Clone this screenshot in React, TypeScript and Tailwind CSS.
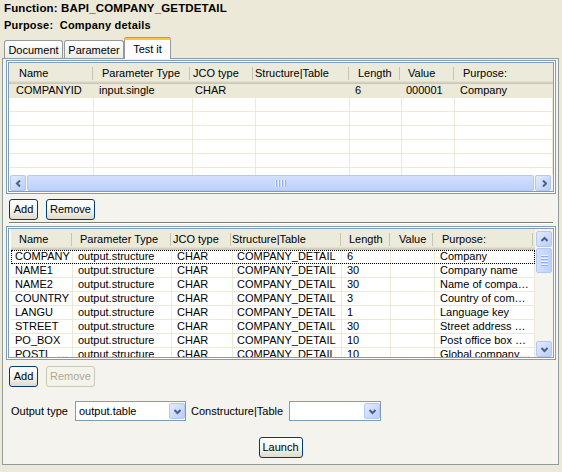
type Head = { label: string; w: string; p: string; sep?: boolean };
type Cell = { w: string; p: string };

const upperHead: Head[] = [
  { label: 'Name', w: 'w-[84px]', p: 'pl-[10px]', sep: true },
  { label: 'Parameter Type', w: 'w-[97px]', p: 'pl-[9px]', sep: true },
  { label: 'JCO type', w: 'w-[63px]', p: 'pl-[3px]', sep: true },
  { label: 'Structure|Table', w: 'w-[96px]', p: 'pl-[2px]', sep: true },
  { label: 'Length', w: 'w-[51px]', p: 'pl-[9px]', sep: true },
  { label: 'Value', w: 'w-[54px]', p: 'pl-[8px]', sep: true },
  { label: 'Purpose:', w: 'w-[99px]', p: 'pl-[9px]' },
];

const upperCells: Cell[] = [
  { w: 'w-[85px]', p: 'pl-[7px]' },
  { w: 'w-[99px]', p: 'pl-[5px]' },
  { w: 'w-[63px]', p: 'pl-[2px]' },
  { w: 'w-[94px]', p: 'pl-[5px]' },
  { w: 'w-[52px]', p: 'pl-[5px]' },
  { w: 'w-[53px]', p: 'pl-[4px]' },
  { w: 'w-[98px]', p: 'pl-[5px]' },
];

const lowerHead: Head[] = [
  { label: 'Name', w: 'w-[61px]', p: 'pl-[8px]', sep: true },
  { label: 'Parameter Type', w: 'w-[99px]', p: 'pl-[8px]', sep: true },
  { label: 'JCO type', w: 'w-[60px]', p: 'pl-[2px]', sep: true },
  { label: 'Structure|Table', w: 'w-[110px]', p: 'pl-[1px]', sep: true },
  { label: 'Length', w: 'w-[49px]', p: 'pl-[8px]', sep: true },
  { label: 'Value', w: 'w-[43px]', p: 'pl-[9px]', sep: true },
  { label: 'Purpose:', w: 'w-[100px]', p: 'pl-[9px]', sep: true },
];

const lowerCells: Cell[] = [
  { w: 'w-[62px]', p: 'pl-[4px]' },
  { w: 'w-[99px]', p: 'pl-[5px]' },
  { w: 'w-[61px]', p: 'pl-[5px]' },
  { w: 'w-[109px]', p: 'pl-[4px]' },
  { w: 'w-[49px]', p: 'pl-[5px]' },
  { w: 'w-[44px]', p: 'pl-[5px]' },
  { w: 'w-[100px]', p: 'pl-[5px]' },
];

const upperRows: string[][] = [
  ['COMPANYID', 'input.single', 'CHAR', '', '6', '000001', 'Company'],
  ['', '', '', '', '', '', ''],
  ['', '', '', '', '', '', ''],
  ['', '', '', '', '', '', ''],
  ['', '', '', '', '', '', ''],
  ['', '', '', '', '', '', ''],
  ['', '', '', '', '', '', ''],
];

// last row is cut by the table edge, as in the screenshot
const lowerRows: string[][] = [
  ['COMPANY', 'output.structure', 'CHAR', 'COMPANY_DETAIL', '6', '', 'Company'],
  ['NAME1', 'output.structure', 'CHAR', 'COMPANY_DETAIL', '30', '', 'Company name'],
  ['NAME2', 'output.structure', 'CHAR', 'COMPANY_DETAIL', '30', '', 'Name of compa…'],
  ['COUNTRY', 'output.structure', 'CHAR', 'COMPANY_DETAIL', '3', '', 'Country of com…'],
  ['LANGU', 'output.structure', 'CHAR', 'COMPANY_DETAIL', '1', '', 'Language key'],
  ['STREET', 'output.structure', 'CHAR', 'COMPANY_DETAIL', '30', '', 'Street address …'],
  ['PO_BOX', 'output.structure', 'CHAR', 'COMPANY_DETAIL', '10', '', 'Post office box …'],
  ['POSTL_…', 'output.structure', 'CHAR', 'COMPANY_DETAIL', '10', '', 'Global company…'],
];

const Chevron = ({ dir }: { dir: 'left' | 'right' | 'up' | 'down' }) => {
  const pts = {
    left: '5,0.5 2,3.5 5,6.5',
    right: '3,0.5 6,3.5 3,6.5',
    up: '0.5,5 3.5,2 6.5,5',
    down: '0.5,2 3.5,5 6.5,2',
  }[dir];
  return (
    <svg width="7" height="7" viewBox="0 0 7 7">
      <polyline points={pts} fill="none" stroke="#4d6185" strokeWidth="2" />
    </svg>
  );
};

const ScrollBtn = ({ dir }: { dir: 'left' | 'right' | 'up' | 'down' }) => (
  <div className="w-[16px] h-[16px] shrink-0 flex items-center justify-center rounded-[2px] border border-[#b4c8f6] bg-linear-to-br from-[#e3ebfe] to-[#b9cdfa]">
    <Chevron dir={dir} />
  </div>
);

const XpButton = ({ label, w, disabled }: { label: string; w: string; disabled?: boolean }) => (
  <button
    type="button"
    className={`${w} h-[21px] shrink-0 rounded-[3px] border text-[11px] leading-none ${
      disabled
        ? 'border-[#c9c7ba] bg-[#f5f4ea] text-[#aca899]'
        : 'border-[#003c74] bg-linear-to-b from-white via-[#f5f5f1] to-[#dedbcd] text-black'
    }`}
  >
    {label}
  </button>
);

const HeaderRow = ({ cols }: { cols: Head[] }) => (
  <div className="flex h-[21px] bg-[#ebeadb] shadow-[inset_0_-1px_0_#cbc7b8,inset_0_-2px_0_#d6d2c2,inset_0_-3px_0_#e2decd]">
    {cols.map((c) => (
      <div key={c.label} className={`${c.w} shrink-0 flex items-center pb-[1px]`}>
        <span className={`flex-1 ${c.p} whitespace-nowrap overflow-hidden`}>{c.label}</span>
        {c.sep && <span className="w-[1px] h-[13px] bg-[#c7c5b2] shrink-0" />}
      </div>
    ))}
  </div>
);

const BodyRow = ({ cells, row, tone }: { cells: Cell[]; row: string[]; tone?: 'sel' | 'focus' }) => (
  <div
    className={`flex h-[14px] border-b border-[#ece9d8] leading-[13px] ${
      tone === 'sel' ? 'bg-[#ece9d8]' : ''
    } ${tone === 'focus' ? 'outline-1 outline-dotted outline-black outline-offset-[-1px]' : ''}`}
  >
    {cells.map((c, i) => (
      <div
        key={i}
        className={`${c.w} ${c.p} shrink-0 whitespace-nowrap overflow-hidden ${
          i < cells.length - 1 || tone !== 'sel' ? 'border-r border-[#ece9d8]' : ''
        }`}
      >
        {row[i]}
      </div>
    ))}
  </div>
);

const Grip = ({ vertical }: { vertical?: boolean }) => (
  <div className={`flex ${vertical ? 'flex-col' : ''} gap-[1px]`}>
    {[0, 1, 2, 3].map((k) => (
      <span
        key={k}
        className={
          vertical
            ? 'w-[7px] h-[1px] bg-[#eef4fe] border-b border-[#8cb0f8] box-content'
            : 'w-[1px] h-[7px] bg-[#eef4fe] border-r border-[#8cb0f8] box-content'
        }
      />
    ))}
  </div>
);

const Frame = ({ children }: { children: React.ReactNode }) => (
  <div className="ml-[3px] w-[550px] h-[134px] border border-[#7f9db9] p-[1px] bg-white">
    <div className="h-full border border-[#7f9db9] bg-white flex flex-col">{children}</div>
  </div>
);

const Combo = ({ value, w }: { value: string; w: string }) => (
  <div className={`${w} h-[20px] shrink-0 border border-[#7f9db9] bg-white flex`}>
    <span className="flex-1 pl-[3px] leading-[18px] whitespace-nowrap">{value}</span>
    <div className="w-[16px] my-[1px] flex items-center justify-center rounded-[2px] border border-[#b4c8f6] bg-linear-to-br from-[#e3ebfe] to-[#b9cdfa]">
      <Chevron dir="down" />
    </div>
  </div>
);

export default function App() {
  return (
    <div className="w-[562px] h-[472px] overflow-hidden bg-[#ece9d8] text-[11px] text-black font-['Liberation_Sans',Arial,sans-serif] flex flex-col">
      <div className="h-[17px] pl-[4px] leading-[17px] font-bold text-[11.5px] tracking-[0.15px]">
        Function: BAPI_COMPANY_GETDETAIL
      </div>
      <div className="h-[17px] pl-[4px] leading-[17px] font-bold tracking-[0.2px] whitespace-pre">
        Purpose:  Company details
      </div>

      <div className="h-[24px] flex items-end pl-[4px]">
        <div className="w-[59px] h-[18px] pt-[1px] flex items-center justify-center rounded-t-[3px] border border-b-0 border-[#919b9c] bg-linear-to-b from-white to-[#ecebe4]">
          Document
        </div>
        <div className="ml-[1px] w-[60px] h-[18px] pt-[1px] flex items-center justify-center rounded-t-[3px] border border-b-0 border-[#919b9c] bg-linear-to-b from-white to-[#ecebe4]">
          Parameter
        </div>
        <div className="relative z-10 -mb-[1px] w-[47px] h-[22px] flex flex-col rounded-t-[3px] border-x border-[#919b9c] bg-[#fcfcfe]">
          <div className="-mx-[1px] h-[3px] rounded-t-[3px] border-t border-[#e68b2c] bg-[#ffc73c]" />
          <div className="flex-1 flex items-center justify-center pb-[1px]">Test it</div>
        </div>
      </div>

      <div className="ml-[2px] w-[557px] h-[407px] border border-[#919b9c] bg-[#f4f3ee] flex flex-col">
        <div className="mt-[1px]">
          <Frame>
            <HeaderRow cols={upperHead} />
            <div className="h-[91px] overflow-hidden">
              {upperRows.map((r, i) => (
                <BodyRow key={i} cells={upperCells} row={r} tone={i === 0 ? 'sel' : undefined} />
              ))}
            </div>
            <div className="h-[16px] flex pl-[1px] pr-[2px] bg-[#f7f6f1]">
              <ScrollBtn dir="left" />
              <div className="flex-1 mx-[1px] rounded-[2px] border border-[#b4c8f6] bg-linear-to-b from-[#d3e0fd] to-[#bdd0fb] flex items-center justify-center">
                <Grip />
              </div>
              <ScrollBtn dir="right" />
            </div>
          </Frame>
        </div>

        <div className="mt-[5px] ml-[6px] flex gap-[8px]">
          <XpButton label="Add" w="w-[29px]" />
          <XpButton label="Remove" w="w-[49px]" />
        </div>

        <div className="mt-[2px] ml-[6px] w-[544px] h-[2px] border-t border-[#7f7d72] bg-white" />

        <div className="mt-[2px]">
          <Frame>
            <div className="flex h-full pl-[2px]">
              <div className="w-[524px] flex flex-col">
                <HeaderRow cols={lowerHead} />
                <div className="h-[107px] overflow-hidden">
                  {lowerRows.map((r, i) => (
                    <BodyRow key={i} cells={lowerCells} row={r} tone={i === 0 ? 'focus' : undefined} />
                  ))}
                </div>
              </div>
              <div className="w-[18px] pl-[1px] pt-[2px] flex flex-col bg-[#f5f4ef]">
                <ScrollBtn dir="up" />
                <div className="mt-[1px] w-[16px] h-[25px] rounded-[2px] border border-[#b4c8f6] bg-linear-to-r from-[#d3e0fd] to-[#bdd0fb] flex items-center justify-center">
                  <Grip vertical />
                </div>
                <div className="flex-1" />
                <ScrollBtn dir="down" />
              </div>
            </div>
          </Frame>
        </div>

        <div className="mt-[6px] ml-[6px] flex gap-[8px]">
          <XpButton label="Add" w="w-[29px]" />
          <XpButton label="Remove" w="w-[49px]" disabled />
        </div>

        <div className="mt-[14px] pl-[8px] flex items-center">
          <span className="w-[64px] shrink-0">Output type</span>
          <Combo value="output.table" w="w-[111px]" />
          <span className="ml-[5px] w-[98px] shrink-0">Constructure|Table</span>
          <Combo value="" w="w-[92px]" />
        </div>

        <div className="mt-[16px] flex justify-center">
          <XpButton label="Launch" w="w-[44px]" />
        </div>
      </div>
    </div>
  );
}
